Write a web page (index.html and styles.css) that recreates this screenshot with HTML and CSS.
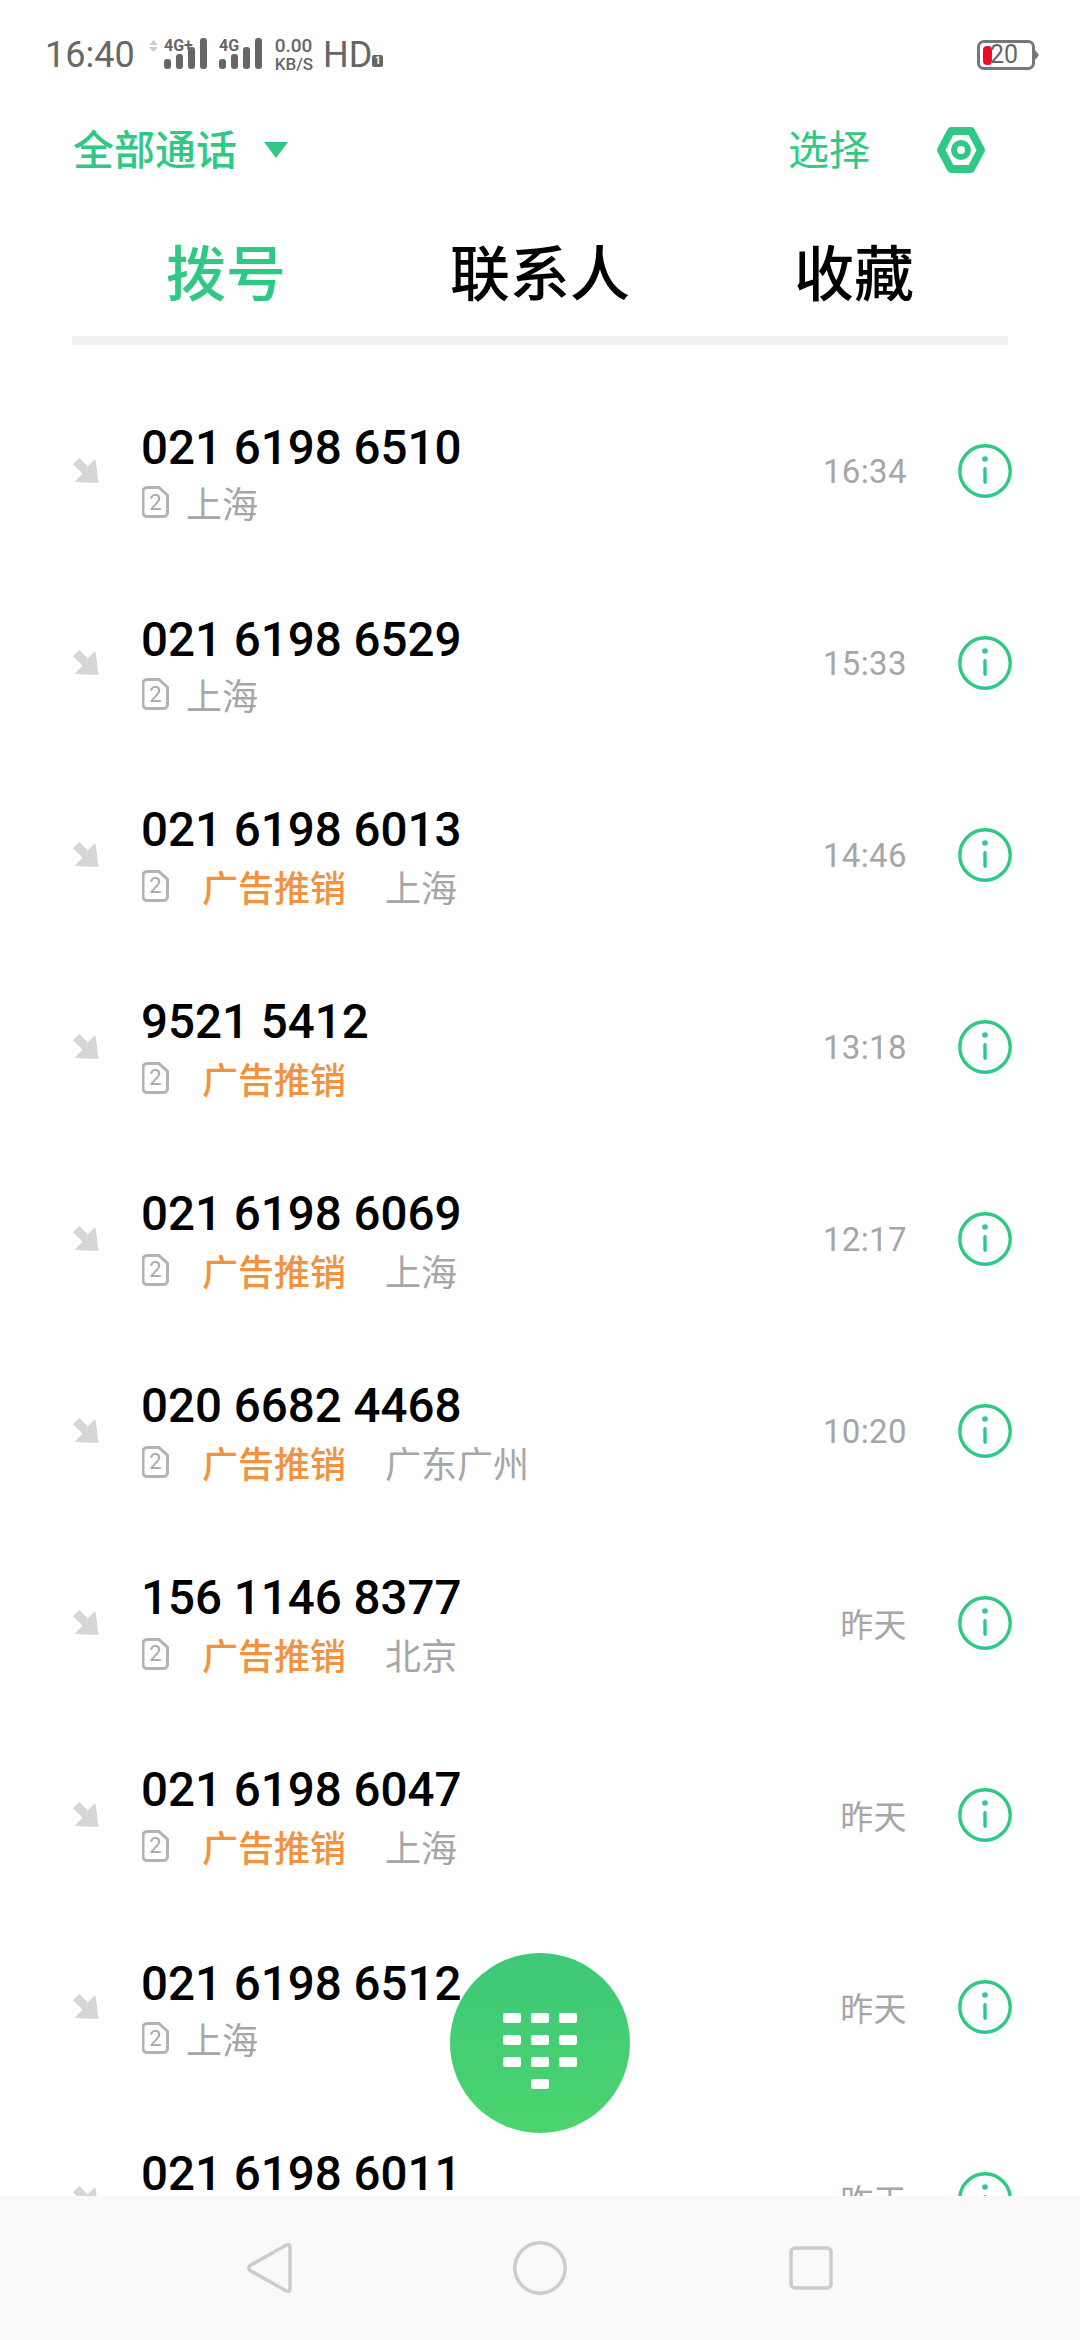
FILE: index.html
```html
<!doctype html>
<html lang="zh-CN">
    <head>
        <meta charset="UTF-8" />
        <meta name="viewport" content="width=device-width, initial-scale=1.0" />
        <title>拨号</title>
        <link rel="stylesheet" href="styles.css">
    </head>
    <body>
        <svg class="defs" width="0" height="0">
            <symbol id="icon-arrow" viewBox="0 0 28 28">
                <polygon class="arrow-shape" points="7.3,1.500 15.700,10 23,2.800 26,25.400 3.300,24.400 11,16.700 1.500,7" />
            </symbol>
            <symbol id="icon-sim" viewBox="0 0 27 32">
                <path d="M5 1.500h12l8.500 8v17a4 4 0 0 1-4 4H5a4 4 0 0 1-4-4v-21a4 4 0 0 1 4-4z" />
            </symbol>
            <symbol id="icon-info" viewBox="0 0 54 54">
                <circle class="info-ring" cx="27" cy="27" r="25.200" />
                <circle class="info-mark" cx="27" cy="15" r="2.800" />
                <rect class="info-mark" x="25.300" y="23" width="3.400" height="17" rx="1.700" />
            </symbol>
        </svg>

        <div class="screen">
            <div class="status">
                <span class="status-time">16:40</span>
                <svg class="status-updown" width="9" height="12" viewBox="0 0 9 12">
                    <polygon points="4.500,0 9,5 0,5" />
                    <polygon points="4.500,12 9,7 0,7" />
                </svg>
                <svg class="signal" width="44" height="36" viewBox="0 0 44 36">
                    <text x="0" y="17">4G+</text>
                    <rect x="0" y="25" width="7" height="10" rx="3" />
                    <rect x="12" y="20" width="7" height="15" rx="3" />
                    <rect x="24" y="13" width="7" height="22" rx="3" />
                    <rect x="36" y="4" width="7" height="31" rx="3" />
                </svg>
                <svg class="signal signal-second" width="44" height="36" viewBox="0 0 44 36">
                    <text x="0" y="17">4G</text>
                    <rect x="0" y="25" width="7" height="10" rx="3" />
                    <rect x="12" y="20" width="7" height="15" rx="3" />
                    <rect x="24" y="13" width="7" height="22" rx="3" />
                    <rect x="36" y="4" width="7" height="31" rx="3" />
                </svg>
                <div class="speed">
                    <span>0.00</span>
                    <span class="speed-unit">KB/S</span>
                </div>
                <span class="status-hd">HD</span>
                <span class="status-hd-badge">1</span>
                <div class="battery">
                    <div class="battery-level"></div>
                    <span class="battery-num">20</span>
                </div>
            </div>

            <div class="toolbar">
                <div class="filter">
                    <span class="filter-label">全部通话</span>
                    <span class="filter-caret"></span>
                </div>
                <span class="select">选择</span>
                <svg class="settings" width="50" height="46" viewBox="0 0 50 46">
                    <polygon class="settings-hex" points="15,4 35,4 45,23 35,42 15,42 5,23" />
                    <circle class="settings-hole" cx="25" cy="23" r="7" />
                </svg>
            </div>

            <div class="tabs">
                <div class="tab active">拨号</div>
                <div class="tab">联系人</div>
                <div class="tab">收藏</div>
            </div>

            <div class="calls">
                <div class="call">
                    <svg class="call-arrow"><use href="#icon-arrow" /></svg>
                    <div class="call-main">
                        <div class="call-number">021 6198 6510</div>
                        <div class="call-sub">
                            <span class="sim"><svg><use href="#icon-sim" /></svg><b>2</b></span>
                            <span class="place">上海</span>
                        </div>
                    </div>
                    <span class="call-time">16:34</span>
                    <svg class="call-info"><use href="#icon-info" /></svg>
                </div>
                <div class="call">
                    <svg class="call-arrow"><use href="#icon-arrow" /></svg>
                    <div class="call-main">
                        <div class="call-number">021 6198 6529</div>
                        <div class="call-sub">
                            <span class="sim"><svg><use href="#icon-sim" /></svg><b>2</b></span>
                            <span class="place">上海</span>
                        </div>
                    </div>
                    <span class="call-time">15:33</span>
                    <svg class="call-info"><use href="#icon-info" /></svg>
                </div>
                <div class="call tagged">
                    <svg class="call-arrow"><use href="#icon-arrow" /></svg>
                    <div class="call-main">
                        <div class="call-number">021 6198 6013</div>
                        <div class="call-sub">
                            <span class="sim"><svg><use href="#icon-sim" /></svg><b>2</b></span>
                            <span class="tag">广告推销</span>
                            <span class="place">上海</span>
                        </div>
                    </div>
                    <span class="call-time">14:46</span>
                    <svg class="call-info"><use href="#icon-info" /></svg>
                </div>
                <div class="call tagged">
                    <svg class="call-arrow"><use href="#icon-arrow" /></svg>
                    <div class="call-main">
                        <div class="call-number">9521 5412</div>
                        <div class="call-sub">
                            <span class="sim"><svg><use href="#icon-sim" /></svg><b>2</b></span>
                            <span class="tag">广告推销</span>
                        </div>
                    </div>
                    <span class="call-time">13:18</span>
                    <svg class="call-info"><use href="#icon-info" /></svg>
                </div>
                <div class="call tagged">
                    <svg class="call-arrow"><use href="#icon-arrow" /></svg>
                    <div class="call-main">
                        <div class="call-number">021 6198 6069</div>
                        <div class="call-sub">
                            <span class="sim"><svg><use href="#icon-sim" /></svg><b>2</b></span>
                            <span class="tag">广告推销</span>
                            <span class="place">上海</span>
                        </div>
                    </div>
                    <span class="call-time">12:17</span>
                    <svg class="call-info"><use href="#icon-info" /></svg>
                </div>
                <div class="call tagged">
                    <svg class="call-arrow"><use href="#icon-arrow" /></svg>
                    <div class="call-main">
                        <div class="call-number">020 6682 4468</div>
                        <div class="call-sub">
                            <span class="sim"><svg><use href="#icon-sim" /></svg><b>2</b></span>
                            <span class="tag">广告推销</span>
                            <span class="place">广东广州</span>
                        </div>
                    </div>
                    <span class="call-time">10:20</span>
                    <svg class="call-info"><use href="#icon-info" /></svg>
                </div>
                <div class="call tagged">
                    <svg class="call-arrow"><use href="#icon-arrow" /></svg>
                    <div class="call-main">
                        <div class="call-number">156 1146 8377</div>
                        <div class="call-sub">
                            <span class="sim"><svg><use href="#icon-sim" /></svg><b>2</b></span>
                            <span class="tag">广告推销</span>
                            <span class="place">北京</span>
                        </div>
                    </div>
                    <span class="call-time">昨天</span>
                    <svg class="call-info"><use href="#icon-info" /></svg>
                </div>
                <div class="call tagged">
                    <svg class="call-arrow"><use href="#icon-arrow" /></svg>
                    <div class="call-main">
                        <div class="call-number">021 6198 6047</div>
                        <div class="call-sub">
                            <span class="sim"><svg><use href="#icon-sim" /></svg><b>2</b></span>
                            <span class="tag">广告推销</span>
                            <span class="place">上海</span>
                        </div>
                    </div>
                    <span class="call-time">昨天</span>
                    <svg class="call-info"><use href="#icon-info" /></svg>
                </div>
                <div class="call">
                    <svg class="call-arrow"><use href="#icon-arrow" /></svg>
                    <div class="call-main">
                        <div class="call-number">021 6198 6512</div>
                        <div class="call-sub">
                            <span class="sim"><svg><use href="#icon-sim" /></svg><b>2</b></span>
                            <span class="place">上海</span>
                        </div>
                    </div>
                    <span class="call-time">昨天</span>
                    <svg class="call-info"><use href="#icon-info" /></svg>
                </div>
                <div class="call tagged">
                    <svg class="call-arrow"><use href="#icon-arrow" /></svg>
                    <div class="call-main">
                        <div class="call-number">021 6198 6011</div>
                        <div class="call-sub"></div>
                    </div>
                    <span class="call-time">昨天</span>
                    <svg class="call-info"><use href="#icon-info" /></svg>
                </div>
            </div>

            <div class="navbar">
                <svg width="46" height="52" viewBox="0 0 46 52">
                    <path d="M40.500 3Q44 1.500 44 5V47Q44 50.500 40.500 49L4 28.500Q1.500 26 4 23.500Z" />
                </svg>
                <svg width="54" height="54" viewBox="0 0 54 54">
                    <circle cx="27" cy="27" r="25.200" />
                </svg>
                <svg width="44" height="44" viewBox="0 0 44 44">
                    <rect x="2" y="2" width="40" height="40" rx="4" />
                </svg>
            </div>

            <div class="dial-button">
                <div class="dial-pad">
                    <i></i><i></i><i></i>
                    <i></i><i></i><i></i>
                    <i></i><i></i><i></i>
                    <i class="dial-zero"></i>
                </div>
            </div>
        </div>
    </body>
</html>
```

FILE: styles.css
```css
body,
html {
    height: 100%;
    margin: 0;
    background-color: #fff;
    font-family: Roboto, "Noto Sans CJK SC", sans-serif;
    overflow: hidden;
}

.defs {
    position: absolute;
}

.screen {
    position: relative;
    display: flex;
    flex-direction: column;
    height: 2340px;
    width: 1080px;
}

/* status bar */
.status {
    display: flex;
    align-items: flex-start;
    flex: none;
    height: 72px;
    padding: 38px 45px 0 45px;
    color: #666;
}

.status-time {
    font-size: 36px;
    line-height: 34px;
}

.status-updown {
    margin: 2px 0 0 14px;
    fill: #ccc;
}

.signal {
    margin: -4px 0 0 6px;
    fill: #666;
}

.signal-second {
    margin-left: 11px;
}

.signal text {
    font-size: 16px;
    font-weight: 700;
}

.speed {
    display: flex;
    flex-direction: column;
    margin: -1px 0 0 12px;
    font-size: 19px;
    font-weight: 500;
    line-height: 18px;
}

.speed-unit {
    font-size: 17px;
}

.status-hd {
    margin-left: 10px;
    font-size: 36px;
    line-height: 34px;
}

.status-hd-badge {
    width: 11px;
    height: 12px;
    margin: 17px 0 0 0;
    border-radius: 2px;
    background-color: #666;
    color: #fff;
    font-size: 10px;
    font-weight: 700;
    line-height: 12px;
    text-align: center;
}

.battery {
    position: relative;
    display: flex;
    align-items: center;
    box-sizing: border-box;
    width: 58px;
    height: 30px;
    margin: 2px 0 0 auto;
    padding-left: 3px;
    border: 3px solid #777;
    border-radius: 7px;
}

.battery::after {
    content: "";
    position: absolute;
    right: -7px;
    top: 7px;
    border: 5px solid transparent;
    border-left: 4px solid #777;
    border-right: 0;
}

.battery-level {
    width: 9px;
    height: 19px;
    border-radius: 4px;
    background-color: #ee0b24;
}

.battery-num {
    margin-left: -2px;
    font-size: 25px;
    line-height: 24px;
}

/* filter row */
.toolbar {
    display: flex;
    align-items: center;
    flex: none;
    height: 80px;
    padding: 0 94px 0 73px;
    color: #2fc985;
}

.filter {
    display: flex;
    align-items: center;
    flex: 1;
    font-size: 41px;
    font-weight: 500;
}

.filter-label {
    margin-bottom: 6px;
}

.filter-caret {
    margin-left: 27px;
    border-top: 16px solid #2fc985;
    border-left: 12px solid transparent;
    border-right: 12px solid transparent;
}

.select {
    margin-bottom: 6px;
    font-size: 41px;
}

.settings {
    margin-left: 66px;
}

.settings-hex {
    fill: none;
    stroke: #2fc985;
    stroke-width: 8;
    stroke-linejoin: round;
}

.settings-hole {
    fill: none;
    stroke: #2fc985;
    stroke-width: 6;
}

/* tabs */
.tabs {
    display: grid;
    grid-template-columns: repeat(3, 1fr);
    column-gap: 6px;
    flex: none;
    margin: 0 72px;
    padding: 50px 0 24px;
    border-bottom: 9px solid #f0f0f0;
}

.tab {
    font-size: 60px;
    font-weight: 500;
    line-height: 72px;
    text-align: center;
    color: #000;
}

.tab.active {
    color: #2fc985;
}

/* call list */
.calls {
    flex: 1;
    min-height: 0;
    padding-top: 30px;
    overflow: hidden;
}

.call {
    display: flex;
    align-items: center;
    height: 192px;
    padding: 0 68px 0 72px;
}

.call-arrow {
    flex: none;
    width: 28px;
    height: 28px;
    margin-right: 42px;
}

.arrow-shape {
    fill: #d6d6d6;
    stroke: #d6d6d6;
    stroke-width: 1;
}

.call-main {
    flex: 1;
    padding-top: 3px;
}

.call.tagged .call-main {
    padding-top: 0;
}

.call-number {
    margin-left: -1px;
    font-size: 47.500px;
    font-weight: 500;
    line-height: 56px;
    color: #000;
}

.call-sub {
    display: flex;
    align-items: center;
    height: 46px;
    margin-top: 3px;
    font-size: 36px;
}

.call.tagged .call-sub {
    margin-top: 5px;
}

.sim {
    position: relative;
    display: flex;
    align-items: center;
    justify-content: center;
    width: 27px;
    height: 32px;
    color: #a8a8a8;
}

.sim svg {
    position: absolute;
    inset: 0;
    width: 27px;
    height: 32px;
    fill: none;
    stroke: #b4b4b4;
    stroke-width: 3;
}

.sim b {
    font-size: 22px;
    font-weight: 400;
}

.place {
    margin-left: 17px;
    color: #a6a6a6;
}

.tag {
    margin-left: 33px;
    font-weight: 500;
    color: #f0923e;
}

.tag + .place {
    margin-left: 39px;
}

.call-time {
    font-size: 33px;
    letter-spacing: 0.400px;
    color: #a6a6a6;
}

.call-info {
    flex: none;
    width: 54px;
    height: 54px;
    margin-left: 51px;
}

.info-ring {
    fill: none;
    stroke: #2fc985;
    stroke-width: 3.400;
}

.info-mark {
    fill: #2fc985;
}

/* bottom nav */
.navbar {
    position: relative;
    display: grid;
    grid-template-columns: repeat(3, 1fr);
    justify-items: center;
    align-items: center;
    flex: none;
    height: 144px;
    padding: 0 133px;
    background-color: #f9f9f9;
}

.navbar svg {
    fill: none;
    stroke: #ccc;
    stroke-width: 3.500;
    stroke-linejoin: round;
}

/* floating dial button */
.dial-button {
    position: absolute;
    left: 450px;
    top: 1953px;
    display: flex;
    align-items: center;
    justify-content: center;
    box-sizing: border-box;
    width: 180px;
    height: 180px;
    padding-top: 16px;
    border-radius: 50%;
    background: linear-gradient(#3ec878, #4bd46e);
}

.dial-pad {
    display: grid;
    grid-template-columns: repeat(3, 18px);
    grid-auto-rows: 10px;
    gap: 12px 10px;
}

.dial-pad i {
    border-radius: 2px;
    background-color: #fff;
}

.dial-zero {
    grid-column: 2;
}
```
